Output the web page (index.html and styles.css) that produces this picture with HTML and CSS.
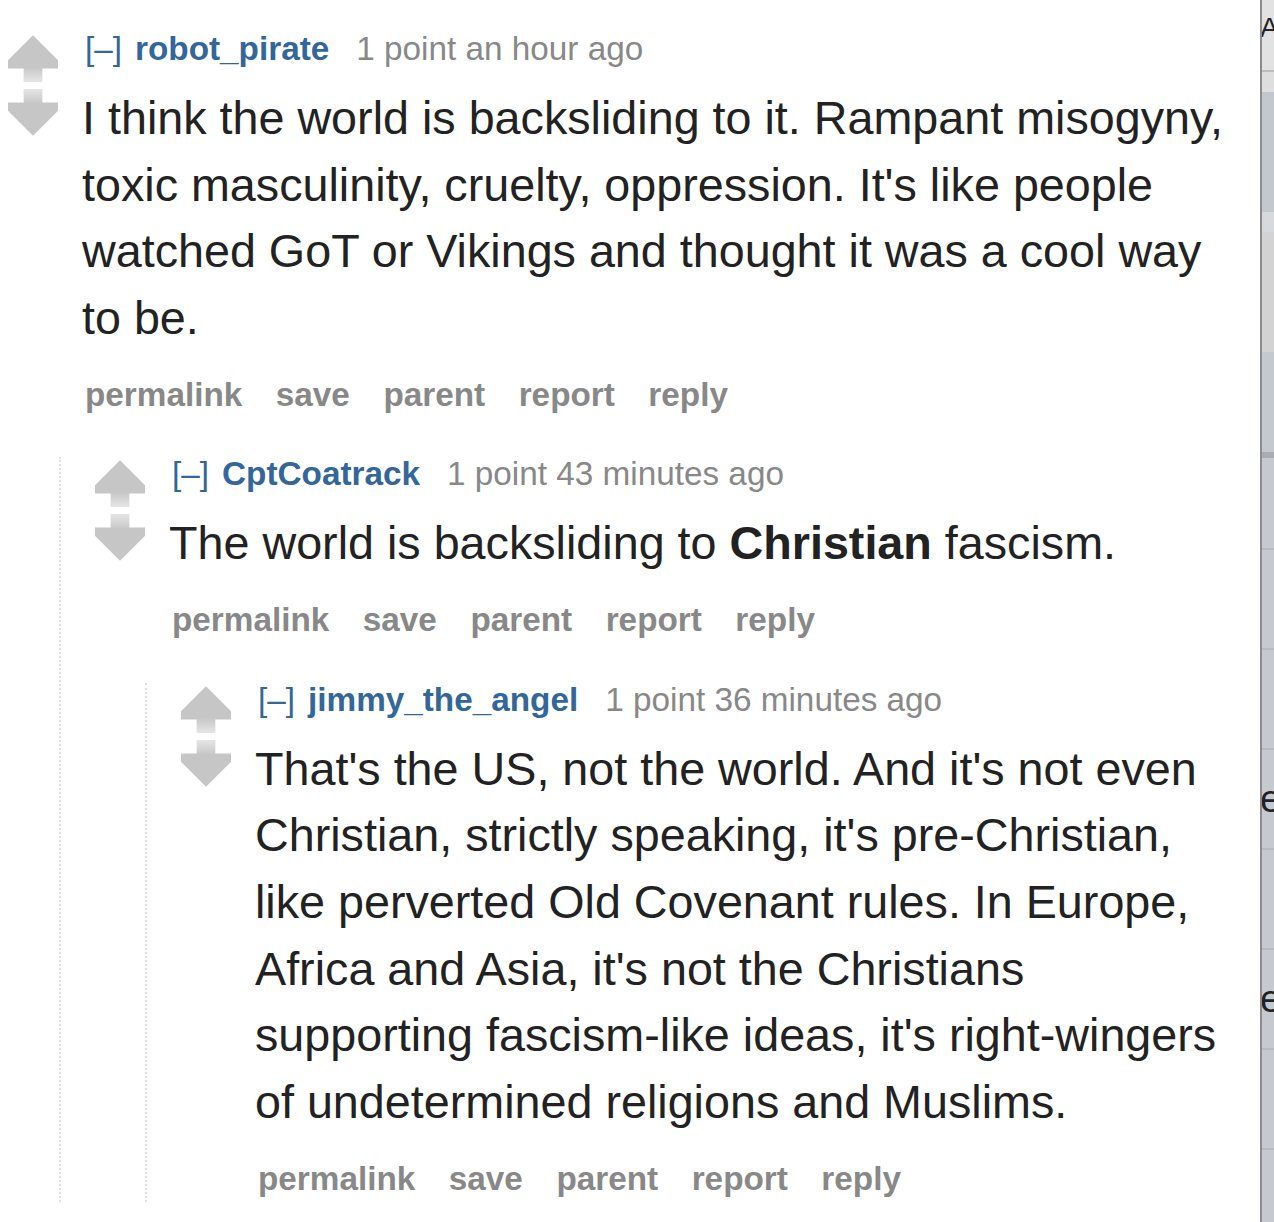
FILE: index.html
```html
<!DOCTYPE html>
<html>
<head>
<meta charset="utf-8">
<link rel="stylesheet" href="styles.css">
</head>
<body>
<svg class="defs" width="0" height="0" aria-hidden="true">
  <defs>
    <linearGradient id="gu" x1="0" y1="0" x2="0" y2="1"><stop offset="0" stop-color="#c6c6c6"/><stop offset="1" stop-color="#e6e6e6"/></linearGradient>
    <linearGradient id="gd" x1="0" y1="1" x2="0" y2="0"><stop offset="0" stop-color="#c6c6c6"/><stop offset="1" stop-color="#e6e6e6"/></linearGradient>
  </defs>
</svg>
<div class="page">
  <main class="content">
    <div class="comment">
      <div class="midcol">
        <svg class="arrow" viewBox="0 0 15 14" width="50" height="47">
          <polygon points="7.5,0 15,7.5 15,10 10.25,10 10.25,14 4.75,14 4.75,10 0,10 0,7.5" fill="#c6c6c6"/>
          <rect x="4.75" y="9.6" width="5.5" height="4.4" fill="url(#gu)"/>
        </svg>
        <svg class="arrow" viewBox="0 0 15 14" width="50" height="47">
          <polygon points="7.5,14 15,6.5 15,4 10.25,4 10.25,0 4.75,0 4.75,4 0,4 0,6.5" fill="#c6c6c6"/>
          <rect x="4.75" y="0" width="5.5" height="4.4" fill="url(#gd)"/>
        </svg>
      </div>
      <div class="entry">
        <p class="tagline"><a class="expand">[–]</a><a class="author">robot_pirate</a><span class="score">1 point an hour ago</span></p>
        <div class="md"><p>I think the world is backsliding to it. Rampant misogyny, toxic masculinity, cruelty, oppression. It's like people watched GoT or Vikings and thought it was a cool way to be.</p></div>
        <ul class="buttons"><li>permalink</li><li>save</li><li>parent</li><li>report</li><li>reply</li></ul>
      </div>
      <div class="child">
        <div class="comment">
          <div class="midcol">
            <svg class="arrow" viewBox="0 0 15 14" width="50" height="47">
              <polygon points="7.5,0 15,7.5 15,10 10.25,10 10.25,14 4.75,14 4.75,10 0,10 0,7.5" fill="#c6c6c6"/>
              <rect x="4.75" y="9.6" width="5.5" height="4.4" fill="url(#gu)"/>
            </svg>
            <svg class="arrow" viewBox="0 0 15 14" width="50" height="47">
              <polygon points="7.5,14 15,6.5 15,4 10.25,4 10.25,0 4.75,0 4.75,4 0,4 0,6.5" fill="#c6c6c6"/>
              <rect x="4.75" y="0" width="5.5" height="4.4" fill="url(#gd)"/>
            </svg>
          </div>
          <div class="entry">
            <p class="tagline"><a class="expand">[–]</a><a class="author">CptCoatrack</a><span class="score">1 point 43 minutes ago</span></p>
            <div class="md"><p>The world is backsliding to <strong>Christian</strong> fascism.</p></div>
            <ul class="buttons"><li>permalink</li><li>save</li><li>parent</li><li>report</li><li>reply</li></ul>
          </div>
          <div class="child">
            <div class="comment">
              <div class="midcol">
                <svg class="arrow" viewBox="0 0 15 14" width="50" height="47">
                  <polygon points="7.5,0 15,7.5 15,10 10.25,10 10.25,14 4.75,14 4.75,10 0,10 0,7.5" fill="#c6c6c6"/>
                  <rect x="4.75" y="9.6" width="5.5" height="4.4" fill="url(#gu)"/>
                </svg>
                <svg class="arrow" viewBox="0 0 15 14" width="50" height="47">
                  <polygon points="7.5,14 15,6.5 15,4 10.25,4 10.25,0 4.75,0 4.75,4 0,4 0,6.5" fill="#c6c6c6"/>
                  <rect x="4.75" y="0" width="5.5" height="4.4" fill="url(#gd)"/>
                </svg>
              </div>
              <div class="entry last">
                <p class="tagline"><a class="expand">[–]</a><a class="author">jimmy_the_angel</a><span class="score">1 point 36 minutes ago</span></p>
                <div class="md"><p>That's the US, not the world. And it's not even Christian, strictly speaking, it's pre-Christian, like perverted Old Covenant rules. In Europe, Africa and Asia, it's not the Christians supporting fascism-like ideas, it's right-wingers of undetermined religions and Muslims.</p></div>
                <ul class="buttons"><li>permalink</li><li>save</li><li>parent</li><li>report</li><li>reply</li></ul>
              </div>
            </div>
          </div>
        </div>
      </div>
    </div>
  </main>
  <aside class="side">
    <div class="sbox top"><span class="glyph">A</span></div>
    <div class="sbox lite1"></div>
    <div class="sbox blue1"></div>
    <div class="sbox lite2"></div>
    <div class="sbox gray1"></div>
    <div class="sbox blue2"></div>
    <div class="sbox dark"></div>
    <div class="sbox row first"></div>
    <div class="sbox row"></div>
    <div class="sbox row"></div>
    <div class="sbox row"><span class="glyph e">e</span></div>
    <div class="sbox row"></div>
    <div class="sbox row"><span class="glyph e">e</span></div>
    <div class="sbox row"></div>
    <div class="sbox row"></div>
  </aside>
</div>
</body>
</html>
```

FILE: styles.css
```css
html, body {
  margin: 0;
  padding: 0;
  background: #fff;
}
body {
  font-family: "Liberation Sans", Arial, sans-serif;
  height: 1222px;
  overflow: hidden;
}
.defs {
  position: absolute;
  width: 0;
  height: 0;
}
.page {
  display: flex;
  height: 1222px;
}
.content {
  flex: 1;
  padding: 32px 27px 0 8px;
  min-width: 0;
}
.comment {
  display: grid;
  grid-template-columns: 74px 1fr;
}
.midcol {
  display: flex;
  flex-direction: column;
  gap: 7px;
  padding-top: 3px;
}
.arrow {
  display: block;
}
.entry {
  min-width: 0;
}
.tagline {
  margin: 0;
  display: flex;
  align-items: baseline;
  font-size: 33.3px;
  line-height: 34px;
  padding-left: 3px;
  color: #888;
  white-space: nowrap;
}
.expand {
  color: #369;
  margin-right: 13px;
}
.author {
  color: #369;
  font-weight: bold;
  margin-right: 27px;
}
.md {
  margin-top: 19px;
  color: #222;
  font-size: 46.7px;
  line-height: 66.7px;
}
.md p {
  margin: 0;
}
.md strong {
  font-weight: bold;
}
.buttons {
  list-style: none;
  margin: 26px 0 0;
  padding: 0 0 0 3px;
  display: flex;
  gap: 33.5px;
  font-size: 33.3px;
  line-height: 34px;
  font-weight: bold;
  color: #888;
}
.entry.last .buttons {
  margin-bottom: 6px;
}
.child {
  grid-column: 1 / -1;
  margin-top: 45px;
  margin-left: 51px;
  border-left: 2px dotted #dcdcfa;
  padding-left: 34px;
}
.child .child {
  margin-top: 46px;
  margin-left: 50px;
}
.side {
  width: 12px;
  flex: none;
  display: flex;
  flex-direction: column;
  border-left: 2px solid #8c8c8e;
  overflow: hidden;
  background: #c4c8cf;
}
.sbox {
  flex: none;
  overflow: hidden;
  white-space: nowrap;
  color: #222;
  font-size: 28px;
}
.sbox.top {
  height: 70px;
  background: #e2e2e2;
  border-bottom: 2px solid #bdbdbd;
  line-height: 56px;
}
.sbox.lite1 {
  height: 20px;
  background: #dedede;
}
.sbox.blue1 {
  height: 120px;
  background: #c3c7ce;
}
.sbox.lite2 {
  height: 20px;
  background: #d7d9dc;
}
.sbox.gray1 {
  height: 120px;
  background: #d3d3d3;
}
.sbox.blue2 {
  height: 100px;
  background: #c4c8cf;
}
.sbox.dark {
  height: 6px;
  background: #a9adb3;
}
.sbox.row {
  height: 98px;
  background: #c6cad0;
  border-bottom: 2px solid #b8bcc2;
}
.sbox.row.first {
  height: 90px;
}
.glyph {
  display: block;
  margin-left: -2px;
}
.glyph.e {
  font-size: 38px;
  line-height: 98px;
}
```
